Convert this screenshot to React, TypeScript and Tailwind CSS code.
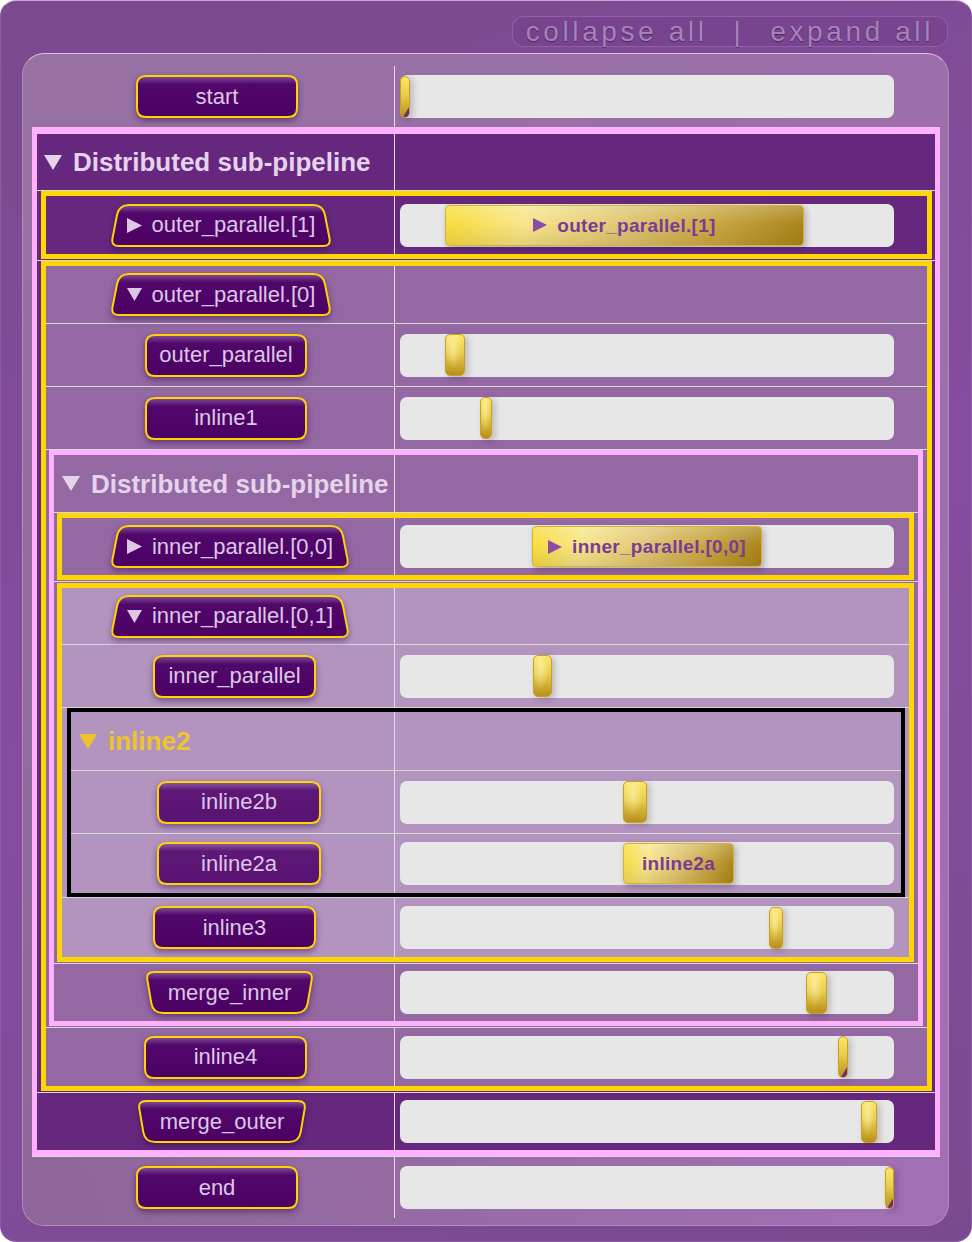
import { useId, type ReactNode } from "react";
import clsx from "clsx";

type Shape = "rect" | "tab" | "drop";
type Pt = [number, number];
type Mark = { x: number; w: number; label?: string; arrow?: boolean; tip?: boolean };

// left cell widths per nesting level, so the column divider always sits at the same x
const cellW = ["w-[363px]", "w-[358px]", "w-[349px]", "w-[341px]", "w-[333px]", "w-[324px]"];
const line = "border-b border-[#d9d9d9]";

function toward(p: Pt, q: Pt, r: number): Pt {
  const dx = q[0] - p[0];
  const dy = q[1] - p[1];
  const len = Math.hypot(dx, dy);
  return [p[0] + (dx / len) * r, p[1] + (dy / len) * r];
}

function roundedPoly(pts: Pt[], radii: number[]) {
  let d = "";
  pts.forEach((p, i) => {
    const prev = pts[(i + pts.length - 1) % pts.length];
    const next = pts[(i + 1) % pts.length];
    const a = toward(p, prev, radii[i]);
    const b = toward(p, next, radii[i]);
    d += `${i === 0 ? "M" : "L"}${a[0]},${a[1]} Q${p[0]},${p[1]} ${b[0]},${b[1]} `;
  });
  return d + "Z";
}

function taskPath(shape: Shape, w: number, h: number) {
  const s = 1;
  if (shape === "tab")
    return roundedPoly(
      [[s + 8, s], [w - s - 8, s], [w - s, h - s], [s, h - s]],
      [10, 10, 8, 8]
    );
  if (shape === "drop")
    return roundedPoly(
      [[s, s], [w - s, s], [w - s - 7, h - s], [s + 7, h - s]],
      [8, 8, 10, 10]
    );
  return roundedPoly([[s, s], [w - s, s], [w - s, h - s], [s, h - s]], [9, 9, 9, 9]);
}

function Tri({ dir, w, h }: { dir: "down" | "right"; w: number; h: number }) {
  const pts = dir === "down" ? `0,0 ${w},0 ${w / 2},${h}` : `0,0 ${w},${h / 2} 0,${h}`;
  return (
    <svg width={w} height={h} className="block shrink-0">
      <polygon points={pts} fill="currentColor" />
    </svg>
  );
}

function Task({
  label,
  w,
  shape = "rect",
  arrow,
  light,
  className,
}: {
  label: string;
  w: number;
  shape?: Shape;
  arrow?: "down" | "right";
  light?: boolean;
  className?: string;
}) {
  const id = "g" + useId().replace(/[^a-zA-Z0-9]/g, "");
  const h = 43;
  return (
    <div className={clsx("relative shrink-0", className)}>
      <svg width={w} height={h} className="block overflow-visible drop-shadow-[0_3px_3px_rgba(40,0,60,0.45)]">
        <defs>
          <linearGradient id={id} x1="0" y1="0" x2="0" y2="1">
            <stop offset="0" stopColor={light ? "#9060a8" : "#80509a"} />
            <stop offset="0.2" stopColor={light ? "#5e1878" : "#52086b"} />
            <stop offset="1" stopColor={light ? "#5a1272" : "#4b0062"} />
          </linearGradient>
        </defs>
        <path d={taskPath(shape, w, h)} fill={`url(#${id})`} stroke="#ffd400" strokeWidth={2} />
      </svg>
      <span className="absolute inset-0 flex items-center justify-center gap-[10px] whitespace-nowrap text-[22px] leading-none text-[#dcc7e6]">
        {arrow === "right" && <Tri dir="right" w={15} h={15} />}
        {arrow === "down" && <Tri dir="down" w={15} h={13} />}
        {label}
      </span>
    </div>
  );
}

function Heading({ label, gold, className }: { label: string; gold?: boolean; className?: string }) {
  return (
    <div
      className={clsx(
        "flex items-center gap-[11px] whitespace-nowrap text-[26px] font-bold leading-none",
        gold ? "text-[#eec42c]" : "text-[#e5d3eb]",
        className
      )}
    >
      <Tri dir="down" w={18} h={15} />
      {label}
    </div>
  );
}

function Track({ mark }: { mark: Mark }) {
  return (
    <div className="flex h-[43px] w-[494px] shrink-0 items-center rounded-[7px] bg-[#e7e7e7]">
      {mark.label ? (
        <div
          style={{ marginLeft: mark.x, width: mark.w }}
          className="flex h-[41px] items-center justify-center gap-[10px] whitespace-nowrap rounded-[4px] border border-[#d6b232] bg-[linear-gradient(to_bottom,rgba(255,255,255,0.22),rgba(255,255,255,0)_45%,rgba(90,60,0,0.12)),linear-gradient(100deg,#f9dc3a_0%,#f7e68c_22%,#dfc674_50%,#c9a742_75%,#a9841c_100%)] text-[19px] font-bold leading-none tracking-[0.3px] text-[#7a3b96] shadow-[2px_3px_6px_rgba(40,20,40,0.28)]"
        >
          {mark.arrow && (
            <span className="text-[#8c4ca6]">
              <Tri dir="right" w={14} h={14} />
            </span>
          )}
          {mark.label}
        </div>
      ) : (
        <div
          style={{ marginLeft: mark.x, width: mark.w }}
          className={clsx(
            "h-[42px] rounded-[5px] border border-[#c9a11c] shadow-[3px_2px_6px_rgba(40,20,40,0.22)]",
            mark.tip
              ? "bg-[linear-gradient(121deg,transparent_80%,#6b2a85_83%),linear-gradient(to_bottom,#fbe66c,#e9cd4a_45%,#b8901e)]"
              : "bg-[radial-gradient(ellipse_at_40%_30%,rgba(255,250,200,0.55),transparent_55%),linear-gradient(to_bottom,#fbe66c,#e9cd4a_45%,#b8901e)]"
          )}
        />
      )}
    </div>
  );
}

function Lane({
  level,
  className,
  left,
  mark,
}: {
  level: number;
  className: string;
  left: ReactNode;
  mark?: Mark;
}) {
  return (
    <div className={clsx("flex", className)}>
      <div className={clsx("flex shrink-0 items-center border-r border-[#dedede]", cellW[level])}>{left}</div>
      <div className="flex flex-1 items-center pl-[5px]">{mark && <Track mark={mark} />}</div>
    </div>
  );
}

export default function App() {
  return (
    <div className="min-h-screen bg-white font-['Liberation_Sans',Arial,sans-serif]">
      <div className="flex h-[1242px] w-[972px] flex-col rounded-[16px] border border-[#8c5ca2] border-t-[#c6a6d6] bg-[linear-gradient(160deg,#7b4a8e,#864ca0_50%,#7a4a90)]">
        <div className="mr-[23px] mt-[15px] flex h-[31px] items-center gap-[26px] self-end rounded-[12px] border border-[#a57bba]/50 bg-[#6f3a88]/40 px-[13px] text-[28px] leading-none tracking-[3.6px] text-[#a484b8] [text-shadow:0_1px_1px_rgba(60,10,80,0.6)]">
          <span>collapse all</span>
          <span>|</span>
          <span>expand all</span>
        </div>

        <div className="ml-[21px] mt-[6px] w-[927px] rounded-[22px] border border-[#b08cc0] border-t-[#dcc4e6] bg-[linear-gradient(to_top_right,rgba(60,50,60,0.14),transparent_45%),linear-gradient(120deg,#9671a1_0%,#9a6fa8_45%,#a26fb4_100%)] pb-[7px] pl-[9px] pr-[8px] pt-[12px]">
          <div className="flex flex-col">
            <Lane level={0} className="h-[61px]" left={<Task label="start" w={162} className="ml-[104px]" />} mark={{ x: 0, w: 10, tip: true }} />

            <div className={line}>
              <div className="border-x-[5px] border-b-[6px] border-t-[7px] border-[#ffb1ff] bg-[#66287e]">
                <Lane level={1} className={clsx("h-[57px]", line)} left={<Heading label="Distributed sub-pipeline" className="pl-[7px]" />} />

                <div className={clsx("pb-[1px]", line)}>
                  <div className="ml-[4px] mr-[3px] border-[5px] border-[#ffd700]">
                    <Lane
                      level={2}
                      className="h-[58px]"
                      left={<Task label="outer_parallel.[1]" w={222} shape="tab" arrow="right" className="ml-[64px]" />}
                      mark={{ x: 45, w: 359, label: "outer_parallel.[1]", arrow: true }}
                    />
                  </div>
                </div>

                <div className={clsx("pb-[1px]", line)}>
                  <div className="ml-[4px] mr-[3px] border-[5px] border-[#ffd700] bg-[#9468a3]">
                    <Lane level={2} className={clsx("h-[58px]", line)} left={<Task label="outer_parallel.[0]" w={222} shape="tab" arrow="down" className="ml-[64px]" />} />
                    <Lane level={2} className={clsx("h-[63px]", line)} left={<Task label="outer_parallel" w={162} className="ml-[99px]" />} mark={{ x: 45, w: 20 }} />
                    <Lane level={2} className={clsx("h-[63px]", line)} left={<Task label="inline1" w={162} className="ml-[99px]" />} mark={{ x: 80, w: 12 }} />

                    <div className={clsx("pb-[1px]", line)}>
                      <div className="ml-[3px] mr-[4px] border-[5px] border-[#ffb1ff]">
                        <Lane level={3} className={clsx("h-[58px]", line)} left={<Heading label="Distributed sub-pipeline" className="pl-[8px]" />} />

                        <div className={clsx("pb-[1px]", line)}>
                          <div className="ml-[3px] mr-[4px] border-[5px] border-[#ffd700]">
                            <Lane
                              level={4}
                              className="h-[57px]"
                              left={<Task label="inner_parallel.[0,0]" w={240} shape="tab" arrow="right" className="ml-[48px]" />}
                              mark={{ x: 132, w: 230, label: "inner_parallel.[0,0]", arrow: true }}
                            />
                          </div>
                        </div>

                        <div className={clsx("pb-[1px] pt-[1px]", line)}>
                          <div className="ml-[3px] mr-[4px] border-[5px] border-[#ffd700] bg-[#b394bf]">
                            <Lane level={4} className={clsx("h-[57px]", line)} left={<Task label="inner_parallel.[0,1]" w={240} shape="tab" arrow="down" className="ml-[48px]" />} />
                            <Lane level={4} className={clsx("h-[63px]", line)} left={<Task label="inner_parallel" w={163} className="ml-[91px]" />} mark={{ x: 133, w: 19 }} />

                            <div className={line}>
                              <div className="ml-[5px] mr-[4px] border-[4px] border-black">
                                <Lane level={5} className={clsx("h-[59px]", line)} left={<Heading label="inline2" gold className="pl-[8px]" />} />
                                <Lane level={5} className={clsx("h-[63px]", line)} left={<Task label="inline2b" w={164} light className="ml-[86px]" />} mark={{ x: 223, w: 24 }} />
                                <Lane level={5} className="h-[59px]" left={<Task label="inline2a" w={164} light className="ml-[86px]" />} mark={{ x: 223, w: 111, label: "inline2a" }} />
                              </div>
                            </div>

                            <Lane level={4} className="h-[59px]" left={<Task label="inline3" w={163} className="ml-[91px]" />} mark={{ x: 369, w: 14 }} />
                          </div>
                        </div>

                        <Lane level={3} className="h-[57px]" left={<Task label="merge_inner" w={169} shape="drop" className="ml-[91px]" />} mark={{ x: 406, w: 21 }} />
                      </div>
                    </div>

                    <Lane level={2} className="h-[58px]" left={<Task label="inline4" w={163} className="ml-[98px]" />} mark={{ x: 438, w: 10, tip: true }} />
                  </div>
                </div>

                <Lane level={1} className="h-[57px]" left={<Task label="merge_outer" w={170} shape="drop" className="ml-[100px]" />} mark={{ x: 461, w: 16 }} />
              </div>
            </div>

            <Lane level={0} className="h-[61px]" left={<Task label="end" w={162} className="ml-[104px]" />} mark={{ x: 485, w: 10, tip: true }} />
          </div>
        </div>
      </div>
    </div>
  );
}
